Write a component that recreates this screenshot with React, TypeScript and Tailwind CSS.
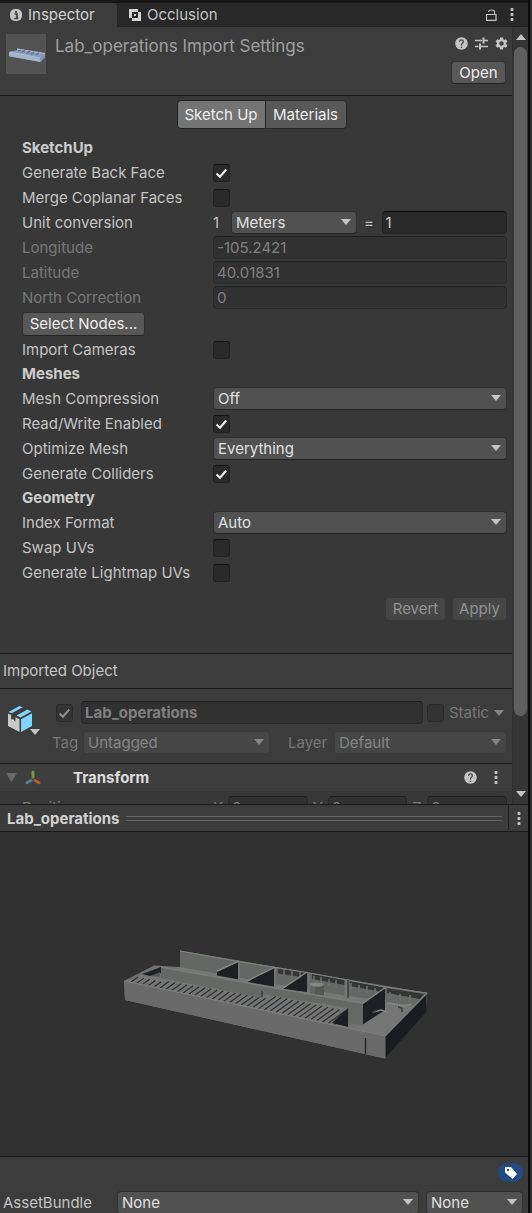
import type { ReactNode } from 'react';
import { MdHelp, MdSettings } from 'react-icons/md';

function Arrow({ className = '', up = false }: { className?: string; up?: boolean }) {
  return (
    <svg className={`pointer-events-none h-[6px] w-[10px] ${className}`} viewBox="0 0 10 6" fill="currentColor" aria-hidden="true">
      <path d={up ? 'M0 6 5 0l5 6z' : 'M0 0h10L5 6z'} />
    </svg>
  );
}

function Dots() {
  return (
    <svg className="h-[13px] w-[4px]" viewBox="0 0 4 13" fill="#c4c4c4" aria-hidden="true">
      <rect x="0.5" y="0" width="3" height="3" rx="1" />
      <rect x="0.5" y="5" width="3" height="3" rx="1" />
      <rect x="0.5" y="10" width="3" height="3" rx="1" />
    </svg>
  );
}

function Check({ id, checked = false, disabled = false, label }: { id: string; checked?: boolean; disabled?: boolean; label?: string }) {
  return (
    <span className="relative block h-[18px] w-[17px] shrink-0">
      <input
        id={id}
        type="checkbox"
        aria-label={label}
        defaultChecked={checked}
        disabled={disabled}
        className="peer block h-[18px] w-[17px] appearance-none rounded-[3px] border border-[#212121] border-t-[#111111] bg-[#2a2a2a] disabled:border-[#2b2b2b] disabled:bg-[#333333]"
      />
      <svg className="pointer-events-none absolute inset-0 hidden h-[18px] w-[17px] peer-checked:block" viewBox="0 0 17 18" fill="none" stroke={disabled ? '#8f8f8f' : '#f0f0f0'} strokeWidth="2" aria-hidden="true">
        <path d="M3.5 9.5 7 12.7l6.2-7.2" />
      </svg>
    </span>
  );
}

function Drop({ id, value, disabled = false, label }: { id: string; value: string; disabled?: boolean; label?: string }) {
  return (
    <span className={`relative block min-w-0 flex-1 ${disabled ? 'text-[#858585]' : 'text-[#e0e0e0]'}`}>
      <select
        id={id}
        aria-label={label}
        disabled={disabled}
        className="block h-[23px] w-full appearance-none rounded-[4px] border border-[#303030] border-b-[#242424] bg-[#515151] pl-1 pr-6 leading-5 opacity-100 disabled:border-[#3a3a3a] disabled:bg-[#464646]"
      >
        <option>{value}</option>
      </select>
      <Arrow className={`absolute right-[6px] top-2 ${disabled ? 'text-[#858585]' : 'text-[#c4c4c4]'}`} />
    </span>
  );
}

function Field({ id, value, disabled = false, label, bold = false }: { id: string; value: string; disabled?: boolean; label?: string; bold?: boolean }) {
  return (
    <input
      id={id}
      type="text"
      aria-label={label}
      defaultValue={value}
      disabled={disabled}
      className={`block h-[23px] w-full min-w-0 flex-1 rounded-[4px] border border-[#212121] border-t-[#0d0d0d] bg-[#2a2a2a] px-[3px] text-[#d2d2d2] disabled:border-[#292929] disabled:border-t-[#202020] disabled:bg-[#313131] disabled:text-[#808080] ${bold ? 'font-bold' : ''}`}
    />
  );
}

function Row({ id, label, children, dim = false }: { id: string; label: string; children: ReactNode; dim?: boolean }) {
  return (
    <div className="grid h-[25px] grid-cols-[191px_1fr] items-center">
      <label htmlFor={id} className={`whitespace-nowrap ${dim ? 'text-[#787878]' : ''}`}>{label}</label>
      <div className="flex min-w-0 items-center">{children}</div>
    </div>
  );
}

function SlidersIcon() {
  return (
    <svg className="h-[13px] w-[13px]" viewBox="0 0 13 13" stroke="#c4c4c4" fill="none" aria-hidden="true">
      <path d="M0 3.5h7M8.5 3.5H13M0 9.5h3.500M6 9.500h7" strokeWidth="1.4" />
      <path d="M8.5.5v6M5 6.5v6" strokeWidth="2" />
    </svg>
  );
}

function Thumbnail() {
  return (
    <svg className="h-10 w-10 shrink-0 bg-[#525252]" viewBox="0 0 40 40" role="img" aria-label="Lab_operations thumbnail">
      <path d="M3 18 11 16l0-1.500 28 5-1 4-3 4.500L3 22.500z" fill="#8799b6" />
      <path d="M3 18.500 34 24.500V28L3 22z" fill="#a5b4cc" />
      <path d="m34 24.500 5-5v4l-5 4.500z" fill="#8092b0" />
      <path d="m11 15 28 4.500M4 18l30 6" stroke="#b3c3da" strokeWidth="1.200" />
      <path d="m16 18 3-2m2 3 3-2m1 3 3-2m-16-1 3-1m15 5 3-2" stroke="#5d6c87" strokeWidth="1.300" />
    </svg>
  );
}

function PrefabIcon() {
  return (
    <svg className="h-[26px] w-[26px]" viewBox="0 0 26 26" aria-hidden="true">
      <path d="M1 7.500 4.200 9v4.500l2 -.5 2.200 3V11.200l4.100 2V26L1 20z" fill="#c8c8c8" />
      <path d="m14 13.200 11-6V20l-11 6z" fill="#7fd6fd" />
      <path d="m1.500 6 11-6 3.200 1.300-11 6z" fill="#7fd6fd" />
      <path d="m9.500 9.500 11-6L24.500 5.500l-11 6z" fill="#7fd6fd" />
    </svg>
  );
}

function Slats() {
  const lines: string[] = [];
  for (let x = 131; x < 338; x += 5.8) {
    const y = 980.5 + (x - 124) * 0.209;
    const depth = x < 160 ? 7 : x < 254 ? 9 + (x - 160) * 0.04 : 17;
    lines.push(`M${x} ${y}l${depth} ${-depth * 0.72}`);
  }
  return <path d={lines.join('')} stroke="#2d2e2f" strokeWidth="1.2" fill="none" />;
}

function Model() {
  return (
    <svg className="h-[134px] w-[336px]" viewBox="96 927 336 134" role="img" aria-label="Lab_operations model preview">
      <path d="M124 981 154 965.500 180 967V950.500L427 993 426 1012 385 1058.500 125 1000z" fill="#707170" />
      <path d="M180 951 427 993V1004L346 996 274 986 180 968z" fill="#656765" />
      <path d="m180 967 102 18 103 17 0 8-22 1-80-17-103-21z" fill="#777877" />
      <path d="m385 1003 35-2-35 35-38-8 16-4z" fill="#747574" />
      <path d="M386 987 426 993.500V999l-7 7-33-4z" fill="#666866" />
      <path d="m275 968 32 5v5l-32-5zM312 974l33 6v5l-33-6zM350 981l33 6v5l-33-6zM387 988l37 6-4 5-33-6z" fill="#343535" />
      <path d="m277 968 0 7m7-6v7m8-5v7m8-6v7m14-3v7m7-6v7m8-5v7m7-6v7m15-4v7m8-5v7m8-6v7m8-5v7m15-3v7m10-5v7m10-6v7" stroke="#707170" strokeWidth="1.500" />
      <path d="m180 951 58 10.500 69 11 78 14.500 42 6" stroke="#818281" fill="none" />
      <path d="m217 972 21-10.500 1 18-22-4zM247 982l27-15v19.500zM283 989l24-16v19z" fill="#1e1f23" />
      <path d="M310 984v11c2 3 12 3 14 0v-11z" fill="#565856" />
      <path d="M310 984v11c1 1 3 2 5 2v-12z" fill="#636563" />
      <ellipse cx="317" cy="984.500" rx="7" ry="2" fill="#858685" />
      <path d="m161 967 119 22 83 15v21l-15-2v-15l-86-12v2l-101-19z" fill="#666866" />
      <path d="m161 967 119 22 83 14" stroke="#7b7c7b" strokeWidth="1.500" fill="none" />
      <path d="m142 974 19-7v6l-11 3z" fill="#202125" />
      <path d="m151 976 9-4v5z" fill="#565856" />
      <path d="m362 1004 23-17v23l-23 15z" fill="#1e1f23" />
      <path d="m217 971 22-10M247 981l28-14M283 988l24-16M362 1004l24-17" stroke="#858685" strokeWidth="1.500" />
      <path d="M239 962v18M275 968v17M309 972v20" stroke="#727372" strokeWidth="2" />
      <path d="M346 980v17" stroke="#747574" strokeWidth="3" />
      <path d="M348 980v18" stroke="#252628" />
      <path d="m142 975-18 6 224 47 0-20-86-14v4l-101-20z" fill="#747574" />
      <Slats />
      <path d="m332 1023 16-15v19z" fill="#1e1f23" />
      <path d="M262 991v6" stroke="#222325" />
      <path d="M363 1004v21l-15-2v-17z" fill="#666866" />
      <path d="M124 981 386 1036 385 1058.500 125 1000z" fill="#696a69" />
      <path d="m124 981 262 55" stroke="#7d7e7d" strokeWidth="1.200" />
      <path d="m385.500 1036 41-43v19l-41 46z" fill="#1b1c20" />
      <path d="m385 1036 42-43" stroke="#7a7b7a" strokeWidth="1.500" />
      <path d="M365.500 1038v16" stroke="#242527" strokeWidth="1.400" />
      <path d="m387 1003 18 3 6-2m-38 8 8-2 7 2" stroke="#858685" strokeWidth="1.500" fill="none" />
      <path d="m398 1007 4 1v4m-30 0 5-2" stroke="#343638" strokeWidth="1.400" fill="none" />
    </svg>
  );
}

const headingStyle = 'flex h-6 items-center font-bold text-[#cccccc]';
const buttonStyle = 'rounded-[4px] border border-[#303030] border-b-[#242424] bg-[#585858] text-center text-[#eeeeee] disabled:border-[#393939] disabled:bg-[#464646] disabled:text-[#929292]';

export default function App() {
  return (
    <div className="flex min-h-screen bg-[#303030] font-['Inter',sans-serif] text-[15px] leading-5 text-[#c4c4c4]">
      <main className="flex min-w-0 flex-1 flex-col bg-[#383838]">
        <nav className="flex h-[27px] border-t-[3px] border-[#191919] bg-[#282828]">
          <button className="flex w-[117px] items-center gap-[6px] rounded-tr-[4px] bg-[#3c3c3c] pl-[10px] text-[#d2d2d2]">
            <svg className="h-3 w-3" viewBox="0 0 12 12" aria-hidden="true">
              <rect width="12" height="12" rx="5" fill="#c4c4c4" />
              <path d="M4.500 5H7v4M4.200 9.500h4M5 2.800h2" stroke="#3c3c3c" strokeWidth="1.700" fill="none" />
            </svg>
            Inspector
          </button>
          <button className="flex items-center gap-[6px] border-b border-[#202020] pl-3 text-[#c4c4c4]">
            <svg className="h-3 w-3" viewBox="0 0 12 12" aria-hidden="true">
              <path d="M0 0h9v3H3v6H0z" fill="#d2d2d2" />
              <path d="M9 3h3v9H3V9h6zM5 5h2v2H5z" fill="#d2d2d2" />
            </svg>
            Occlusion
          </button>
          <div className="flex flex-1 items-center justify-end gap-[13px] border-b border-[#202020] pr-[14px]">
            <button aria-label="Lock">
              <svg className="h-3 w-[11px]" viewBox="0 0 11 12" fill="none" stroke="#c4c4c4" aria-hidden="true">
                <path d="M.5 5.500h9.500v5.800H.5zM2.500 2.800C2.500.4 8.500.4 8.500 2.800v2.700" strokeWidth="1.200" />
              </svg>
            </button>
            <button aria-label="Inspector menu"><Dots /></button>
          </div>
        </nav>

        <div className="flex">
          <div className="min-w-0 flex-1">
            <header className="flex h-[69px] justify-between border-b border-[#1a1a1a] bg-[#3c3c3c] pl-[6px] pr-[6px] pt-[7px]">
              <div className="flex gap-[9px]">
                <Thumbnail />
                <h1 className="pt-[2px] text-[17px] text-[#a0a0a0]">Lab_operations Import Settings</h1>
              </div>
              <div className="flex flex-col items-end gap-[10px] pt-[2px]">
                <div className="-mr-[3px] flex items-center gap-[6px] text-[#c4c4c4]">
                  <button aria-label="Help"><MdHelp size={15} /></button>
                  <button aria-label="Presets"><SlidersIcon /></button>
                  <button aria-label="Settings"><MdSettings size={15} /></button>
                </div>
                <button className={`${buttonStyle} h-[23px] w-[55px]`}>Open</button>
              </div>
            </header>

            <div className="flex justify-center pl-[11px] pt-1">
              <button className="h-[29px] w-[89px] rounded-l-[4px] border border-[#202020] bg-[#747474] text-[#eeeeee]">Sketch Up</button>
              <button className="h-[29px] w-[81px] rounded-r-[4px] border border-l-0 border-[#282828] bg-[#585858] text-[#eeeeee]">Materials</button>
            </div>

            <form className="pb-8 pl-[22px] pr-[5px] pt-[7px]">
              <h2 className={headingStyle}>SketchUp</h2>
              <Row id="backface" label="Generate Back Face"><Check id="backface" checked /></Row>
              <Row id="coplanar" label="Merge Coplanar Faces"><Check id="coplanar" /></Row>
              <Row id="unit" label="Unit conversion">
                <span className="w-[18px]">1</span>
                <div className="flex min-w-0 flex-1"><Drop id="unit" value="Meters" /></div>
                <span className="w-[25px] text-center">=</span>
                <div className="flex min-w-0 flex-1"><Field id="ratio" value="1" label="Conversion result" /></div>
              </Row>
              <Row id="longitude" label="Longitude" dim><Field id="longitude" value="-105.2421" disabled /></Row>
              <Row id="latitude" label="Latitude" dim><Field id="latitude" value="40.01831" disabled /></Row>
              <Row id="north" label="North Correction" dim><Field id="north" value="0" disabled /></Row>
              <div className="flex h-[27px] items-center">
                <button type="button" className={`${buttonStyle} h-6 w-[123px]`}>Select Nodes...</button>
              </div>
              <Row id="cameras" label="Import Cameras"><Check id="cameras" /></Row>
              <h2 className={headingStyle}>Meshes</h2>
              <Row id="compression" label="Mesh Compression"><Drop id="compression" value="Off" /></Row>
              <Row id="readwrite" label="Read/Write Enabled"><Check id="readwrite" checked /></Row>
              <Row id="optimize" label="Optimize Mesh"><Drop id="optimize" value="Everything" /></Row>
              <Row id="colliders" label="Generate Colliders"><Check id="colliders" checked /></Row>
              <h2 className={headingStyle}>Geometry</h2>
              <Row id="index" label="Index Format"><Drop id="index" value="Auto" /></Row>
              <Row id="swap" label="Swap UVs"><Check id="swap" /></Row>
              <Row id="lightmap" label="Generate Lightmap UVs"><Check id="lightmap" /></Row>
              <div className="mt-3 flex justify-end gap-[6px]">
                <button type="button" disabled className={`${buttonStyle} h-6 w-[61px]`}>Revert</button>
                <button type="button" disabled className={`${buttonStyle} h-6 w-[55px]`}>Apply</button>
              </div>
            </form>

            <h2 className="flex h-9 items-center border-y border-[#1a1a1a] bg-[#3c3c3c] pl-[3px]">Imported Object</h2>

            <section className="flex h-[74px] bg-[#3c3c3c] pr-[5px] pt-3 text-[#787878]">
              <button aria-label="Object icon" className="relative ml-[7px] mt-[2px] h-8 w-[33px] shrink-0 self-start">
                <PrefabIcon />
                <Arrow className="absolute bottom-0 right-0 text-[#c4c4c4]" />
              </button>
              <div className="flex min-w-0 flex-1 flex-col gap-[7px] pl-4">
                <div className="flex items-center">
                  <Check id="active" label="Active" checked disabled />
                  <div className="ml-2 mr-1 flex min-w-0 flex-1"><Field id="name" value="Lab_operations" label="Name" disabled bold /></div>
                  <Check id="static" disabled />
                  <label htmlFor="static" className="ml-[5px] w-[45px]">Static</label>
                  <Arrow className="mr-[3px] text-[#858585]" />
                </div>
                <div className="-ml-1 flex items-center">
                  <label htmlFor="tag" className="w-[31px]">Tag</label>
                  <Drop id="tag" value="Untagged" disabled />
                  <label htmlFor="layer" className="ml-[18px] w-[46px]">Layer</label>
                  <div className="flex w-[173px]"><Drop id="layer" value="Default" disabled /></div>
                </div>
              </div>
            </section>

            <section className="border-t border-[#1a1a1a]">
              <div className="flex h-[27px] items-center bg-[#3e3e3e] pl-[6px] pr-[14px]">
                <svg className="h-[9px] w-[11px] text-[#6a6a6a]" viewBox="0 0 11 9" fill="currentColor" aria-hidden="true"><path d="M0 0h11L5.500 9z" /></svg>
                <svg className="ml-2 h-4 w-4" viewBox="0 0 16 16" strokeWidth="3" strokeLinecap="round" aria-hidden="true">
                  <path d="M8 2v5" stroke="#729c3c" />
                  <path d="m6 10.500-4 2.300" stroke="#527f98" />
                  <path d="m10 10.500 4 2.300" stroke="#b5593a" />
                </svg>
                <h2 className="ml-8 flex-1 font-bold text-[#dddddd]">Transform</h2>
                <button aria-label="Transform help"><MdHelp size={15} /></button>
                <button aria-label="Transform menu" className="ml-4"><Dots /></button>
              </div>
              <div className="flex h-[13px] items-start overflow-hidden pl-[22px] pr-[5px] pt-[5px] text-[#787878]">
                <span className="w-[191px] pt-[2px]">Position</span>
                <div className="flex min-w-0 flex-1 gap-[5px]">
                  {['X', 'Y', 'Z'].map((axis) => (
                    <div key={axis} className="flex min-w-0 flex-1">
                      <label htmlFor={`position${axis}`} className="w-[15px] shrink-0 pt-[2px]">{axis}</label>
                      <Field id={`position${axis}`} value="0" disabled />
                    </div>
                  ))}
                </div>
              </div>
            </section>
          </div>

          <div className="flex w-4 shrink-0 flex-col items-center border-l border-[#303030] bg-[#353535] pb-[7px] pt-[7px] text-[#c4c4c4]">
            <Arrow up />
            <div className="mb-[75px] mt-[7px] w-[13px] flex-1 rounded-full bg-[#5f5f5f]" />
            <Arrow />
          </div>
        </div>

        <div className="flex h-7 border-y border-[#1a1a1a] bg-[#3c3c3c]">
          <h2 className="pl-[7px] pt-1 font-bold text-[#d2d2d2]">Lab_operations</h2>
          <div className="mx-[6px] my-auto h-[5px] flex-1 border-y border-[#646464]" />
          <button aria-label="Preview menu" className="my-[1px] flex w-5 items-center justify-center border-l border-[#202020]"><Dots /></button>
        </div>
        <div className="flex flex-1 items-center justify-center bg-[#313131]"><Model /></div>
        <footer className="border-t border-[#1a1a1a] bg-[#3c3c3c] pl-[3px] pr-[5px]">
          <div className="flex h-[34px] justify-end pt-[6px]">
            <button aria-label="Asset labels" className="flex h-[19px] w-[25px] items-center justify-center rounded-full bg-[#234b83]">
              <svg className="h-3 w-3" viewBox="0 0 12 12" aria-hidden="true">
                <path d="M0 0h6l6 7-4.500 5L0 5.500zM2 2v2h2V2z" fill="#fff" fillRule="evenodd" />
              </svg>
            </button>
          </div>
          <div className="flex h-[22px] items-start">
            <label htmlFor="bundle" className="w-[114px] pt-[2px]">AssetBundle</label>
            <Drop id="bundle" value="None" />
            <div className="ml-[7px] flex w-[97px]"><Drop id="variant" value="None" label="AssetBundle variant" /></div>
          </div>
        </footer>
      </main>
      <div className="w-1 shrink-0 border-l-2 border-[#0c0c0c] bg-[#2c2c2c]" />
    </div>
  );
}
